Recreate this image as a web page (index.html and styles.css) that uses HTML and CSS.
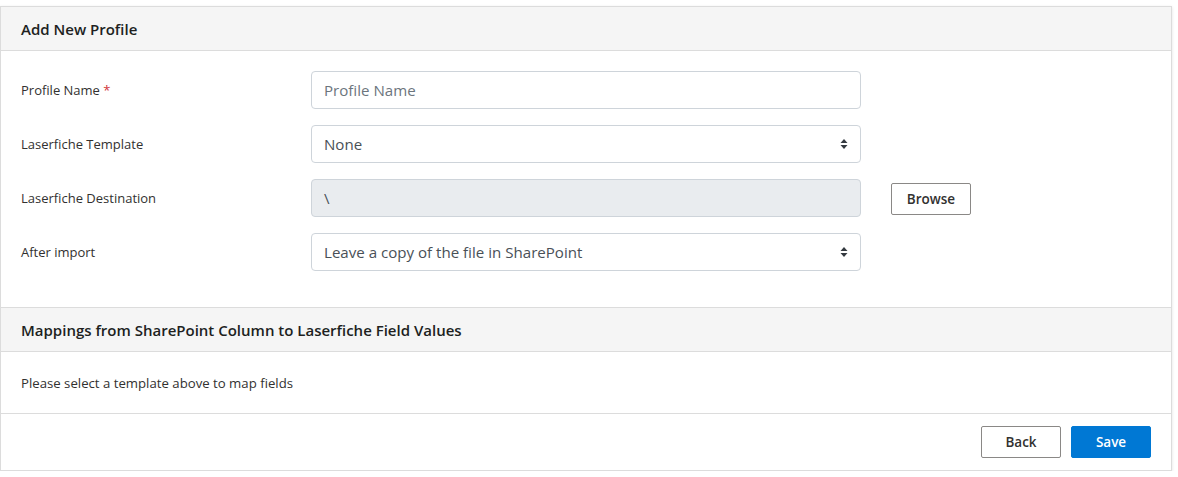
FILE: index.html
```html
<!DOCTYPE html>
<html>
<head>
<meta charset="utf-8">
<link rel="stylesheet" href="styles.css">
</head>
<body>
<div class="card">
  <div class="card-header"><h2 class="title">Add New Profile</h2></div>
  <div class="form-body">
    <div class="row">
      <label class="label">Profile Name <span class="req">*</span></label>
      <div class="control"><span class="placeholder">Profile Name</span></div>
    </div>
    <div class="row">
      <label class="label">Laserfiche Template</label>
      <div class="control select"><span>None</span>
        <svg class="arrows" width="8" height="12" viewBox="0 0 8 12"><path d="M4 1 L7.5 5 H0.5 Z M4 11 L7.5 7 H0.5 Z" fill="#343a40"/></svg>
      </div>
    </div>
    <div class="row">
      <label class="label">Laserfiche Destination</label>
      <div class="control disabled"><span>\</span></div>
      <button class="btn btn-default browse">Browse</button>
    </div>
    <div class="row">
      <label class="label">After import</label>
      <div class="control select"><span>Leave a copy of the file in SharePoint</span>
        <svg class="arrows" width="8" height="12" viewBox="0 0 8 12"><path d="M4 1 L7.5 5 H0.5 Z M4 11 L7.5 7 H0.5 Z" fill="#343a40"/></svg>
      </div>
    </div>
  </div>
  <div class="card-header section"><h2 class="title">Mappings from SharePoint Column to Laserfiche Field Values</h2></div>
  <div class="map-body">Please select a template above to map fields</div>
  <div class="footer">
    <button class="btn btn-default">Back</button>
    <button class="btn btn-primary">Save</button>
  </div>
</div>
</body>
</html>
```
FILE: styles.css
```css
* { box-sizing: border-box; }
body {
  margin: 0;
  background: #fff;
  font-family: "Open Sans", "Noto Sans", sans-serif;
  color: #323130;
}
.card {
  margin-top: 6px;
  width: 1172px;
  border: 1px solid #dcdcdc;
  box-shadow: 0 1px 3px rgba(0,0,0,0.12);
  background: #fff;
}
.card-header {
  height: 44px;
  background: #f5f5f5;
  border-bottom: 1px solid #dcdcdc;
  padding: 0 20px;
  display: flex;
  align-items: center;
}
.card-header.section { border-top: 1px solid #dcdcdc; height: 45px; }
.title {
  margin: 0;
  font-size: 15px;
  font-weight: 600;
  color: #201f1e;
}
.form-body {
  padding: 20px 20px 36px;
  display: flex;
  flex-direction: column;
  gap: 16px;
}
.row {
  display: flex;
  align-items: center;
  height: 38px;
}
.label {
  width: 290px;
  font-size: 13px;
  color: #323130;
}
.req { color: #d13438; }
.control {
  width: 550px;
  height: 38px;
  border: 1px solid #ced4da;
  border-radius: 4px;
  padding: 0 12px;
  display: flex;
  align-items: center;
  font-size: 15.1px;
  color: #495057;
}
.placeholder { color: #6c757d; }
.select { justify-content: space-between; padding-right: 12px; }
.arrows { display: block; }
.disabled { background: #e9ecef; }
.btn {
  width: 80px;
  height: 32px;
  border-radius: 2px;
  font-family: inherit;
  font-size: 13.5px;
  font-weight: 600;
  cursor: pointer;
  padding: 0;
}
.btn-default {
  background: #fff;
  border: 1px solid #8a8886;
  color: #323130;
}
.btn-primary {
  background: #0078d4;
  border: 1px solid #0078d4;
  color: #fff;
}
.browse { margin-left: 30px; margin-top: 2px; }
.map-body {
  height: 62px;
  border-bottom: 1px solid #dcdcdc;
  padding: 0 20px;
  display: flex;
  align-items: center;
  font-size: 13.2px;
  color: #323130;
}
.footer {
  height: 56px;
  display: flex;
  justify-content: flex-end;
  align-items: center;
  gap: 10px;
  padding: 0 20px;
}
```
